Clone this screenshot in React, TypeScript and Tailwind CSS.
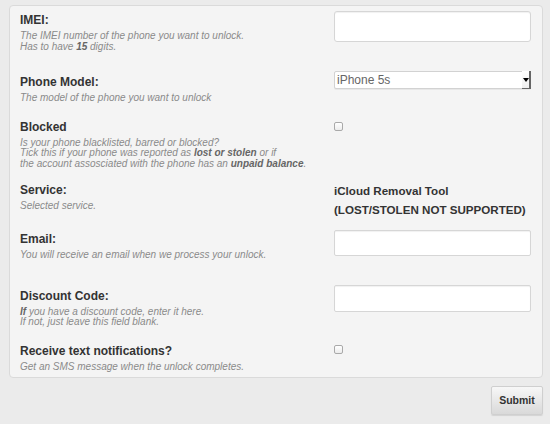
import React from "react";

function Title({ children }: { children: React.ReactNode }) {
  return <div className="text-[12px] leading-[15px] font-bold text-[#333]">{children}</div>;
}

function Desc({ children }: { children: React.ReactNode }) {
  return <div className="mt-[3px] text-[10px] leading-[10.5px] italic text-[#8a8a8a]">{children}</div>;
}

function Checkbox({ className = "" }: { className?: string }) {
  return (
    <div
      className={`h-[9px] w-[9px] rounded-[2px] border border-[#a9a9a9] bg-gradient-to-b from-white to-[#ececec] ${className}`}
    />
  );
}

export default function App() {
  return (
    <div className="min-h-[424px] w-[550px] bg-[#ebebeb] pt-[5px] pl-[9px] pr-[7px] font-['Liberation_Sans',Arial,sans-serif]">
      <div className="rounded-[4px] border border-[#dadada] bg-[#f4f4f4] pt-[5px] pb-[5px] pl-[10px]">
        {/* IMEI */}
        <div className="flex items-start">
          <div className="mt-[2px] w-[314px]">
            <Title>IMEI:</Title>
            <Desc>
              The IMEI number of the phone you want to unlock.
              <br />
              Has to have <b className="text-[#666]">15</b> digits.
            </Desc>
          </div>
          <input
            type="text"
            className="block h-[31px] w-[197px] rounded-[3px] border border-[#d6d6d6] bg-white shadow-[inset_0_1px_1px_rgba(0,0,0,0.06)] outline-none"
          />
        </div>

        {/* Phone model */}
        <div className="mt-[19px] flex items-start">
          <div className="mt-[4px] w-[314px]">
            <Title>Phone Model:</Title>
            <Desc>The model of the phone you want to unlock</Desc>
          </div>
          <div className="relative flex h-[18px] w-[197px] items-center rounded-[2px] border border-[#d2d2d2] bg-white shadow-[0_1px_0_rgba(0,0,0,0.05)]">
            <span className="pl-[2px] text-[12px] text-[#666]">iPhone 5s</span>
            <div className="absolute right-[-1px] top-[-1px] flex h-[18px] w-[9px] items-center justify-center border-r-2 border-b border-[#666] bg-gradient-to-b from-white to-[#eee]">
              <div className="h-0 w-0 border-x-[3px] border-t-[4px] border-x-transparent border-t-black" />
            </div>
          </div>
        </div>

        {/* Blocked */}
        <div className="mt-[16px] flex items-start">
          <div className="w-[314px]">
            <Title>Blocked</Title>
            <Desc>
              Is your phone blacklisted, barred or blocked?
              <br />
              Tick this if your phone was reported as <b className="text-[#666]">lost or stolen</b> or if
              <br />
              the account assosciated with the phone has an <b className="text-[#666]">unpaid balance</b>.
            </Desc>
          </div>
          <Checkbox className="mt-[2px]" />
        </div>

        {/* Service */}
        <div className="mt-[11.5px] flex items-start">
          <div className="mt-[2px] w-[314px]">
            <Title>Service:</Title>
            <Desc>Selected service.</Desc>
          </div>
          <div className="text-[11.6px] leading-[19px] font-bold text-[#333]">
            iCloud Removal Tool
            <br />
            (LOST/STOLEN NOT SUPPORTED)
          </div>
        </div>

        {/* Email */}
        <div className="mt-[11px] flex items-start">
          <div className="mt-[2px] w-[314px]">
            <Title>Email:</Title>
            <Desc>You will receive an email when we process your unlock.</Desc>
          </div>
          <input
            type="email"
            className="block h-[26px] w-[197px] rounded-[2px] border border-[#d6d6d6] bg-white shadow-[inset_0_1px_1px_rgba(0,0,0,0.06)] outline-none"
          />
        </div>

        {/* Discount */}
        <div className="mt-[24.5px] flex items-start">
          <div className="mt-[4px] w-[314px]">
            <Title>Discount Code:</Title>
            <Desc>
              <b className="text-[#666]">If</b> you have a discount code, enter it here.
              <br />
              If not, just leave this field blank.
            </Desc>
          </div>
          <input
            type="text"
            className="block h-[27px] w-[197px] rounded-[2px] border border-[#d6d6d6] bg-white shadow-[inset_0_1px_1px_rgba(0,0,0,0.06)] outline-none"
          />
        </div>

        {/* SMS */}
        <div className="mt-[16px] flex items-start">
          <div className="w-[314px]">
            <Title>Receive text notifications?</Title>
            <Desc>Get an SMS message when the unlock completes.</Desc>
          </div>
          <Checkbox className="mt-[1px]" />
        </div>
      </div>

      <div className="mt-[8px] flex justify-end">
        <button className="h-[29px] w-[52px] rounded-[2px] border border-[#cfcfcf] bg-gradient-to-b from-[#f7f7f7] to-[#d9d9d9] text-[10.5px] font-bold text-[#333] shadow-[0_1px_1px_rgba(0,0,0,0.1)]">
          Submit
        </button>
      </div>
    </div>
  );
}
